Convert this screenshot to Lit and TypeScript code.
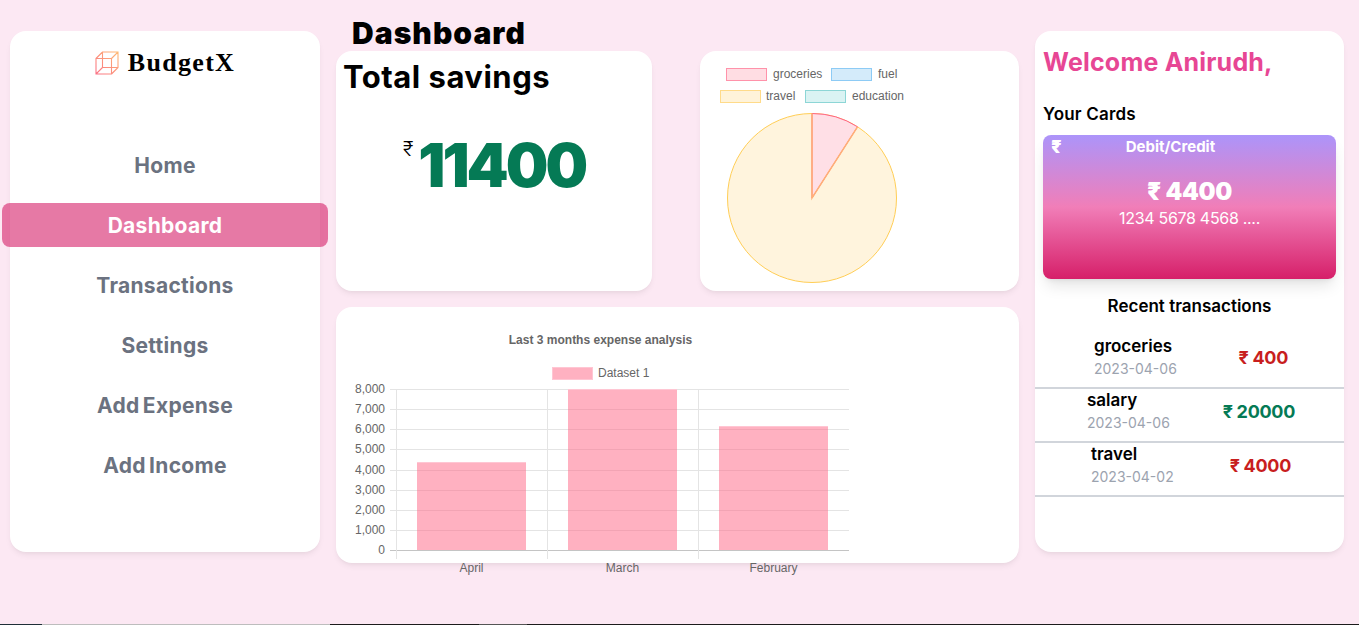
import { LitElement, html, svg, css } from "lit";
import { customElement } from "lit/decorators.js";

const NAV = ["Home", "Dashboard", "Transactions", "Settings", "Add Expense", "Add Income"];

const TX = [
  { name: "groceries", date: "2023-04-06", amount: "₹ 400", income: false, left: 59, right: 56 },
  { name: "salary", date: "2023-04-06", amount: "₹ 20000", income: true, left: 52, right: 49 },
  { name: "travel", date: "2023-04-02", amount: "₹ 4000", income: false, left: 56, right: 53 },
];

const TICKS = [8000, 7000, 6000, 5000, 4000, 3000, 2000, 1000, 0];
const BARS = [
  { label: "April", value: 4400, x: 417 },
  { label: "March", value: 8000, x: 568 },
  { label: "February", value: 6200, x: 719 },
];

@customElement("app-root")
export class AppRoot extends LitElement {
  static styles = css`
    :host {
      display: block;
      height: 625px;
      overflow: hidden;
      background: #fce8f3;
      font-family: Inter, "Noto Sans", sans-serif;
      color: #000;
    }
    .page {
      display: grid;
      grid-template-columns: 310px 683px 309px;
      column-gap: 16px;
      padding: 31px 0 0 10px;
      align-items: start;
    }
    .card {
      background: #fff;
      border-radius: 16px;
      box-shadow: 0 4px 6px -1px rgba(0, 0, 0, 0.06), 0 2px 4px -2px rgba(0, 0, 0, 0.05);
    }
    .side {
      height: 521px;
      display: flex;
      flex-direction: column;
      align-items: center;
    }
    .brand {
      display: flex;
      align-items: center;
      gap: 9px;
      height: 24px;
      margin-top: 20px;
      font-family: "Liberation Serif", serif;
      font-weight: 700;
      font-size: 26px;
      letter-spacing: 1.3px;
    }
    nav {
      align-self: stretch;
      margin-top: 68px;
      display: flex;
      flex-direction: column;
      gap: 16px;
    }
    .link {
      height: 44px;
      display: flex;
      align-items: center;
      justify-content: center;
      font-size: 21px;
      font-weight: 700;
      letter-spacing: 0.3px;
      word-spacing: -2px;
      color: #6b7280;
    }
    .link.on {
      margin: 0 -8px;
      border-radius: 8px;
      background: rgba(214, 31, 105, 0.6);
      color: #fff;
    }
    .mid {
      display: flex;
      flex-direction: column;
    }
    h1 {
      margin: -16px 0 0 16px;
      height: 36px;
      font-size: 30px;
      line-height: 36px;
      font-weight: 900;
      letter-spacing: 1.05px;
    }
    .top {
      display: flex;
      justify-content: space-between;
    }
    .savings {
      width: 316px;
      height: 240px;
      padding: 6px 7px;
      box-sizing: border-box;
    }
    h2 {
      margin: 0;
      font-size: 31px;
      line-height: 40px;
      font-weight: 700;
      letter-spacing: 0.5px;
    }
    .total {
      display: flex;
      justify-content: center;
      align-items: flex-start;
      gap: 5px;
      margin-top: 30px;
      color: #057a55;
      font-size: 60px;
      line-height: 76px;
      font-weight: 900;
      letter-spacing: -3px;
    }
    .total span {
      margin-top: 8px;
      color: #000;
      font-size: 20px;
      line-height: 28px;
      font-weight: 300;
      letter-spacing: 0;
    }
    .pie {
      width: 319px;
      height: 240px;
    }
    .bars {
      height: 256px;
      margin-top: 16px;
    }
    svg {
      display: block;
      overflow: visible;
    }
    svg text {
      font-family: "Liberation Sans", Arial, sans-serif;
      font-size: 12px;
      fill: #666;
    }
    svg .title {
      font-weight: 700;
    }
    .right {
      height: 521px;
      padding-top: 14px;
      box-sizing: border-box;
    }
    .welcome {
      margin: 0 8px;
      font-size: 25px;
      line-height: 34px;
      font-weight: 700;
      letter-spacing: 0.2px;
      color: #e74694;
    }
    h3 {
      margin: 23px 8px 9px;
      font-size: 17px;
      line-height: 24px;
      font-weight: 600;
      letter-spacing: 0.2px;
    }
    .bank {
      margin: 0 8px;
      height: 144px;
      border-radius: 8px;
      background: linear-gradient(#ac94fa, #f17eb8 50%, #d61f69 100%);
      box-shadow: 0 10px 15px -3px rgba(0, 0, 0, 0.1), 0 4px 6px -4px rgba(0, 0, 0, 0.1);
      color: #fff;
      text-align: center;
      display: flex;
      flex-direction: column;
    }
    .bank-head {
      display: flex;
      gap: 64px;
      align-items: center;
      height: 22px;
      padding: 0 8px;
      font-size: 15px;
      font-weight: 700;
    }
    .bank-head b {
      font-size: 18px;
    }
    .balance {
      margin-top: 21px;
      font-size: 24px;
      line-height: 28px;
      font-weight: 900;
      letter-spacing: -0.3px;
    }
    .number {
      font-size: 16px;
      line-height: 24px;
      letter-spacing: -0.3px;
    }
    .recent {
      margin-top: 15px;
      text-align: center;
      font-size: 17px;
      line-height: 24px;
      font-weight: 600;
    }
    .list {
      margin-top: 17px;
    }
    .tx {
      box-sizing: border-box;
      height: 54px;
      padding-bottom: 8px;
      border-bottom: 2px solid #d1d5db;
      display: flex;
      justify-content: space-between;
      align-items: center;
    }
    .tx-name {
      font-size: 17px;
      line-height: 24px;
      font-weight: 600;
    }
    .tx-date {
      font-size: 14px;
      line-height: 22px;
      color: #9ca3af;
    }
    .tx-amt {
      font-size: 18px;
      font-weight: 700;
      letter-spacing: -0.3px;
      color: #c81e1e;
    }
    .tx-amt.in {
      color: #057a55;
    }
    .strip {
      position: fixed;
      left: 0;
      right: 0;
      bottom: 0;
      height: 1px;
      background: linear-gradient(
        90deg,
        #1f2f38 0 42px,
        #bdbdbd 42px 330px,
        #1c1c1c 330px 479px,
        #555 479px 527px,
        #1c1c1c 527px
      );
    }
  `;

  renderBrand() {
    return html`<svg width="24" height="24" viewBox="0 0 24 24" fill="none" stroke-width="1.1">
      <defs>
        <linearGradient id="cube" x1="1" y1="0" x2="0" y2="1">
          <stop offset="0" stop-color="#fdba74"></stop>
          <stop offset="1" stop-color="#fb7185"></stop>
        </linearGradient>
      </defs>
      <path
        stroke="url(#cube)"
        d="M1 7.5H16.5V23H1ZM7.5 1H23V16.5H7.5ZM1 7.5L7.5 1M16.5 7.5L23 1M16.5 23L23 16.5M1 23L7.5 16.5"
      ></path>
    </svg>`;
  }

  renderPie() {
    return html`<svg width="319" height="240" viewBox="700 51 319 240">
      <rect x="726.5" y="68.5" width="40" height="12" fill="#ffdde3" stroke="#ff92aa"></rect>
      <text x="773" y="78">groceries</text>
      <rect x="831.5" y="68.5" width="40" height="12" fill="#d4ebfa" stroke="#8dcbf5"></rect>
      <text x="878" y="78">fuel</text>
      <rect x="720.5" y="90.5" width="40" height="12" fill="#fff3d9" stroke="#ffdb8a"></rect>
      <text x="766" y="100">travel</text>
      <rect x="805.5" y="90.5" width="40" height="12" fill="#daf3f3" stroke="#8dd6d6"></rect>
      <text x="852" y="100">education</text>
      <circle cx="812" cy="198" r="84.5" fill="#fff4dd" stroke="#ffce56"></circle>
      <path d="M812 198V113.5A84.5 84.5 0 0 1 857.5 126.8Z" fill="#ffdfe6" stroke="#ff6384"></path>
      <path d="M812 113.5V198L857.5 126.8" fill="none" stroke="#ffb077" stroke-width="1.5"></path>
    </svg>`;
  }

  renderBars() {
    // chart area runs from y 389 to 550 in page coordinates, 8000 units tall
    const y = (v: number) => 550 - (v / 8000) * 161;
    return html`<svg width="683" height="256" viewBox="336 307 683 256">
      <text class="title" x="600.5" y="344" text-anchor="middle">Last 3 months expense analysis</text>
      <rect x="552.5" y="367.5" width="40" height="12" fill="#ffb1c1" stroke="#ffc6d3"></rect>
      <text x="598" y="377">Dataset 1</text>
      ${TICKS.map((t) => {
        const ty = Math.round(y(t)) + 0.5;
        return svg`
          <line x1="390" x2="849" y1=${ty} y2=${ty} stroke=${t === 0 ? "#c4c4c4" : "#e4e4e4"}></line>
          <text x="385" y=${ty + 3.5} text-anchor="end">${t.toLocaleString("en-US")}</text>
        `;
      })}
      ${[396.5, 547.5, 698.5].map(
        (x) => svg`<line x1=${x} x2=${x} y1="389" y2="559" stroke="#e4e4e4"></line>`
      )}
      ${BARS.map((b) => {
        const top = Math.ceil(y(b.value));
        return svg`
          <rect x=${b.x} y=${top} width="109" height=${550 - top} fill="rgba(255, 99, 132, 0.5)"></rect>
          <line x1=${b.x} x2=${b.x + 109} y1=${top + 0.5} y2=${top + 0.5} stroke="#ffc6d3"></line>
          <text x=${b.x + 54.5} y="572" text-anchor="middle">${b.label}</text>
        `;
      })}
    </svg>`;
  }

  render() {
    return html`
      <div class="page">
        <aside class="card side">
          <div class="brand">${this.renderBrand()}<span>BudgetX</span></div>
          <nav>
            ${NAV.map((n) => html`<div class="link ${n === "Dashboard" ? "on" : ""}">${n}</div>`)}
          </nav>
        </aside>
        <main class="mid">
          <h1>Dashboard</h1>
          <div class="top">
            <section class="card savings">
              <h2>Total savings</h2>
              <div class="total"><span>₹</span>11400</div>
            </section>
            <section class="card pie">${this.renderPie()}</section>
          </div>
          <section class="card bars">${this.renderBars()}</section>
        </main>
        <aside class="card right">
          <div class="welcome">Welcome Anirudh,</div>
          <h3>Your Cards</h3>
          <div class="bank">
            <div class="bank-head"><b>₹</b><span>Debit/Credit</span></div>
            <div class="balance">₹ 4400</div>
            <div class="number">1234 5678 4568 ....</div>
          </div>
          <div class="recent">Recent transactions</div>
          <div class="list">
            ${TX.map(
              (t) => html`<div class="tx" style="padding-left: ${t.left}px; padding-right: ${t.right}px">
                <div>
                  <div class="tx-name">${t.name}</div>
                  <div class="tx-date">${t.date}</div>
                </div>
                <div class="tx-amt ${t.income ? "in" : ""}">${t.amount}</div>
              </div>`
            )}
          </div>
        </aside>
      </div>
      <div class="strip"></div>
    `;
  }
}

declare global {
  interface HTMLElementTagNameMap {
    "app-root": AppRoot;
  }
}
